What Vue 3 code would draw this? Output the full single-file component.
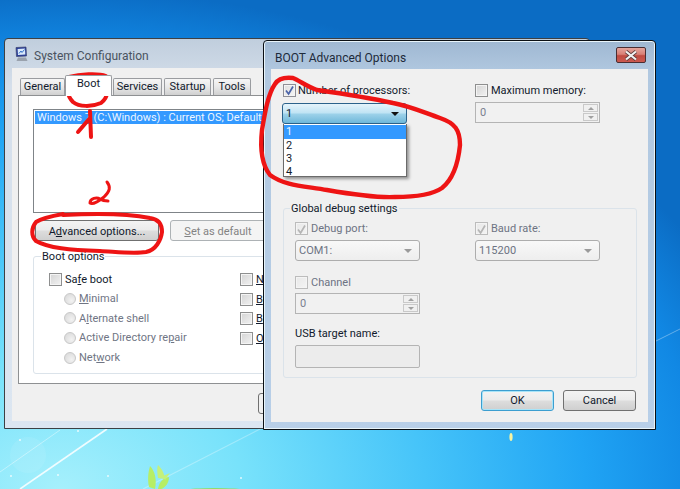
<script setup>
const tabs = ['General', 'Boot', 'Services', 'Startup', 'Tools']
const radios = [
  { before: '', key: 'M', after: 'inimal' },
  { before: 'A', key: 'l', after: 'ternate shell' },
  { before: 'Active Directory re', key: 'p', after: 'air' },
  { before: 'Net', key: 'w', after: 'ork' }
]
const sideOptions = [
  { key: 'N', after: 'o GUI boot' },
  { key: 'B', after: 'oot log' },
  { key: 'B', after: 'ase video' },
  { key: 'O', after: 'S boot information' }
]
const procs = ['1', '2', '3', '4']
</script>

<template>
  <div class="desktop">
    <svg class="wall" width="680" height="489" viewBox="0 0 680 489">
      <ellipse cx="28" cy="455" rx="18" ry="18" fill="#ffffff" opacity=".08" />
      <path d="M20 489L107 429" stroke="#fff" stroke-width="1.6" opacity=".85" fill="none" />
      <path d="M0 472L60 430" stroke="#fff" stroke-width="1" opacity=".4" fill="none" />
      <path d="M143 489L262 428" stroke="#fff" stroke-width="1.2" opacity=".3" fill="none" />
      <path d="M656 341L680 329" stroke="#fff" stroke-width="1" opacity=".35" fill="none" />
      <path d="M149 487C147 477 149 470 150 466C155 471 157 480 155 489Z" fill="#b6ee66" />
      <path d="M158 478C157 472 157 467 158 465C162 469 165 474 164 479Z" fill="#c4f17c" />
      <path d="M158 489C159 482 163 478 169 477C169 483 165 488 161 489Z" fill="#b6ee66" />
      <path d="M163 476L170 473L165 480Z" fill="#c4f17c" />
      <ellipse cx="215" cy="490" rx="28" ry="2" fill="#8fdc6c" />
      <ellipse cx="511" cy="437" rx="1.6" ry="4" fill="#f6f4a2" />
      <g fill="#fff" opacity=".8">
        <circle cx="20" cy="440" r="1" /><circle cx="78" cy="431" r="1" /><circle cx="108" cy="476" r="1" />
        <circle cx="58" cy="475" r="1" /><circle cx="241" cy="478" r="1" /><circle cx="11" cy="476" r="1" />
      </g>
    </svg>

    <section class="window sys">
      <header class="titlebar">
        <svg class="appicon" width="15" height="16" viewBox="0 0 15 16">
          <path d="M2 1.5L12 1L12.5 10L2.5 10.5Z" fill="#2b3f9a" stroke="#3b4470" stroke-width=".7" />
          <path d="M3.6 3L11 2.6L11.3 8.6L4 9Z" fill="#d9e9fb" />
          <path d="M5 7.5L7 5L8 6.5L10.5 3.5" stroke="#3370c8" stroke-width="1" fill="none" />
          <path d="M4 11.5H12L13.5 15H2.5Z" fill="#9aa2ad" />
        </svg>
        <span class="title">System Configuration</span>
      </header>
      <div class="client">
        <div class="tabs">
          <div v-for="t in tabs" :key="t" class="tab" :class="['tab-' + t.toLowerCase(), { active: t === 'Boot' }]">{{ t }}</div>
        </div>
        <div class="sheet">
          <div class="listbox">
            <div class="listsel">Windows 7 (C:\Windows) : Current OS; Default OS</div>
          </div>
          <div class="actions">
            <button class="btn adv">A<u>d</u>vanced options...</button>
            <button class="btn off setdef"><u>S</u>et as default</button>
          </div>
          <div class="group bootopts">
            <span class="legend">Boot options</span>
            <div class="bootcols">
              <div class="bootleft">
                <label class="cbrow safe"><i class="cb"></i><span>Sa<u>f</u>e boot</span></label>
                <div v-for="r in radios" :key="r.after" class="radiorow">
                  <i class="radio"></i><span>{{ r.before }}<u>{{ r.key }}</u>{{ r.after }}</span>
                </div>
              </div>
              <div class="bootright">
                <label v-for="o in sideOptions" :key="o.after" class="cbrow"><i class="cb"></i><span><u>{{ o.key }}</u>{{ o.after }}</span></label>
              </div>
            </div>
          </div>
        </div>
        <div class="sysfoot"><button class="btn">OK</button></div>
      </div>
    </section>

    <section class="window adv-dialog">
      <header class="titlebar dlgbar">
        <span class="dlgtitle">BOOT Advanced Options</span>
        <button class="close" aria-label="Close">
          <svg width="14" height="11" viewBox="0 0 14 11">
            <path d="M2 1.5L12 9.5M12 1.5L2 9.5" stroke="#5b3a3a" stroke-width="3.6" fill="none" />
            <path d="M2 1.5L12 9.5M12 1.5L2 9.5" stroke="#f2f2f2" stroke-width="2.2" fill="none" />
          </svg>
        </button>
      </header>
      <div class="dlgclient">
        <div class="twocol top">
          <div class="col">
            <label class="cbrow lead"><i class="cb on"><svg width="11" height="11" viewBox="0 0 11 11"><path d="M2 5.5L4.6 9L9 1.5" stroke="#4a63a8" stroke-width="1.7" fill="none" /></svg></i><span>Number of processors:</span></label>
            <div class="combo focus">
              <span>1</span>
              <i class="arrow dark"></i>
              <ul class="droplist">
                <li v-for="p in procs" :key="p" :class="{ sel: p === '1' }">{{ p }}</li>
              </ul>
            </div>
          </div>
          <div class="col">
            <label class="cbrow raised"><i class="cb"></i><span>Maximum memory:</span></label>
            <div class="spin mem">
              <span>0</span>
              <div class="spinbtns"><b><i class="tri up"></i></b><b><i class="tri"></i></b></div>
            </div>
          </div>
        </div>

        <div class="group debug">
          <span class="legend">Global debug settings</span>
          <div class="twocol inner">
            <div class="col">
              <label class="cbrow dis raised"><i class="cb off"><svg width="11" height="11" viewBox="0 0 11 11"><path d="M2 5.5L4.6 9L9 1.5" stroke="#b5b5b5" stroke-width="1.7" fill="none" /></svg></i><span>Debug port:</span></label>
              <div class="combo ghost"><span>COM1:</span><i class="arrow"></i></div>
            </div>
            <div class="col">
              <label class="cbrow dis raised"><i class="cb off"><svg width="11" height="11" viewBox="0 0 11 11"><path d="M2 5.5L4.6 9L9 1.5" stroke="#b5b5b5" stroke-width="1.7" fill="none" /></svg></i><span>Baud rate:</span></label>
              <div class="combo ghost"><span>115200</span><i class="arrow"></i></div>
            </div>
          </div>
          <label class="cbrow dis raised channel"><i class="cb off"></i><span>Channel</span></label>
          <div class="spin chan">
            <span>0</span>
            <div class="spinbtns"><b><i class="tri up"></i></b><b><i class="tri"></i></b></div>
          </div>
          <div class="usblabel">USB target name:</div>
          <div class="usbinput"></div>
        </div>

        <div class="dlgfoot">
          <button class="btn def">OK</button>
          <button class="btn">Cancel</button>
        </div>
      </div>
    </section>

    <svg class="ink" width="680" height="489" viewBox="0 0 680 489" fill="none" stroke="#ee1414" stroke-width="4" stroke-linecap="round" stroke-linejoin="round">
      <path d="M69 77C80 74 98 73 106 76C110 84 109 97 101 103C92 107 79 107 73 102C67 96 65 85 69 77" />
      <path d="M90 111L91 137M78 132L90 118" />
      <path d="M107 182C111 187 110 191 104 197C99 201 93 205 90 203C90 198 97 197 100 199C103 201 105 201 108 201" stroke-width="3" />
      <path d="M63 214C52 216 42 218 36 222C31 228 31 236 36 241C48 248 70 250 100 251C118 252 134 254 146 252C156 250 161 240 162 232C162 224 158 219 150 218C130 214 100 213 63 215" />
      <path d="M293 78C284 77 278 79 275 84C268 94 265 112 262 130C260 148 262 165 270 175C285 186 305 186 327 190C350 194 375 198 395 197C415 197 432 195 442 188C452 180 458 165 460 145C460 130 455 123 440 118C425 113 410 106 393 103C370 98 345 94 317 90C308 87 300 81 293 78" stroke-width="4.4" />
    </svg>
  </div>
</template>

<style>
html, body { margin: 0; padding: 0; overflow: hidden; }
</style>

<style scoped>
.desktop {
  position: relative;
  width: 680px;
  height: 489px;
  overflow: hidden;
  font-family: Roboto, "Noto Sans", sans-serif;
  font-size: 11px;
  color: #111a2c;
  background: radial-gradient(ellipse 730px 500px at 60px 490px, #a6f0fc 0, #78e2fb 25%, #46c4f9 50%, #20a4f4 72%, #1188e4 88%, #0b6cc4 100%);
}
.wall, .ink { position: absolute; left: 0; top: 0; }
.ink { pointer-events: none; }
.window { position: absolute; box-sizing: border-box; display: flex; flex-direction: column; }
.sys {
  left: 4px; top: 38px; width: 586px; height: 391px;
  border: 1px solid #3d4044; border-radius: 4px 4px 0 0;
  background: linear-gradient(#c0cedd 0, #d5dfeb 12%, #dce6f1 100%);
  overflow: hidden;
}
.titlebar { height: 29px; flex: none; display: flex; align-items: center; box-sizing: border-box; }
.sys .titlebar { padding: 4px 0 0 9px; }
.appicon { margin-right: 5px; flex: none; margin-top: -4px; }
.title { font-size: 12px; color: #4a5360; }
.client {
  flex: 1; margin: 0 7px 7px; background: #f0f0f0;
  padding: 7px 0 0 6px; display: flex; flex-direction: column;
}
.tabs { display: flex; align-items: flex-end; height: 20px; padding-left: 2px; gap: 1px; }
.tab {
  height: 17px; box-sizing: border-box; border: 1px solid #9a9ca0; border-bottom: 0;
  border-radius: 2px 2px 0 0; text-align: center; line-height: 16px;
  background: linear-gradient(#f6f6f6, #e8e8e8 50%, #d0d0d0);
}
.tab-general { width: 45px; }
.tab-boot { width: 47px; }
.tab-services { width: 49px; }
.tab-startup { width: 47px; margin-left: 1px; }
.tab-tools { width: 38px; margin-left: 1px; }
.tab.active { background: #fff; position: relative; z-index: 1; margin-bottom: -1px; height: 21px; line-height: 16px; margin-left: -1px; }
.sheet {
  box-sizing: border-box; height: 289px; background: #fff;
  border: 1px solid #8e9092; padding: 13px 14px 0 14px;
}
.listbox { height: 104px; box-sizing: border-box; border: 1px solid #7f8488; padding: 1px; overflow: hidden; }
.listsel { background: #3399ff; color: #eef6ff; height: 13px; line-height: 13px; white-space: nowrap; padding-left: 2px; }
.actions { display: flex; gap: 11px; margin-top: 7px; padding-left: 2px; }
.btn {
  box-sizing: border-box; width: 73px; height: 21px; padding: 0;
  border: 1px solid #707070; border-radius: 3px;
  font: inherit; color: #111a2c; line-height: 17px;
  background: linear-gradient(#f3f3f3, #ebebeb 48%, #dddddd 52%, #cfcfcf);
}
.adv { width: 124px; padding-top: 1px; }
.off { background: #f4f4f4; border-color: #adb2b5; color: #838383; padding-top: 1px; }
.setdef { width: 96px; }
.group { position: relative; box-sizing: border-box; border: 1px solid #dbe3ea; border-radius: 3px; }
.legend { position: absolute; left: 7px; top: -8px; background: inherit; padding: 0 1px; line-height: 16px; }
.debug .legend { left: 6px; }
.bootopts { margin-top: 15px; height: 118px; background: #fff; }
.bootcols { display: flex; padding: 16px 0 0 15px; }
.bootleft { width: 191px; }
.bootright { display: flex; flex-direction: column; gap: 6.6px; }
.cbrow { display: flex; align-items: center; height: 13px; gap: 3px; white-space: nowrap; }
.raised span { margin-top: -1px; }
.cb {
  width: 13px; height: 13px; flex: none; box-sizing: border-box;
  border: 1px solid #8e8f8f; box-shadow: inset 0 0 0 1px #f4f4f4;
  background: linear-gradient(135deg, #d4d4d4, #f2f2f2);
  display: flex; align-items: center; justify-content: center;
}
.cb.on { background: linear-gradient(135deg, #dedede, #f6f6f6); border-color: #8f8f96; }
.cb.off { background: linear-gradient(135deg, #e8e8e8, #f4f4f4); border-color: #bcbcbc; }
.radiorow { display: flex; align-items: center; height: 19.6px; margin-left: 15px; gap: 3px; color: #6f7584; }
.bootleft .safe { margin-bottom: 3px; }
.radio {
  width: 12px; height: 12px; border-radius: 50%; flex: none; box-sizing: border-box;
  border: 1px solid #c8c8c8; background: radial-gradient(circle at 65% 65%, #f2f2f2, #d6d6d6);
}
.sysfoot { padding: 9px 0 0 240px; }
.sysfoot .btn { width: 74px; height: 21px; background: #f0f0f0; }

.adv-dialog {
  left: 263px; top: 40px; width: 393px; height: 390px;
  border: 1px solid #0a0f14; border-radius: 4px 4px 0 0;
  box-shadow: inset 0 0 0 1px #e8f4fa;
  background: linear-gradient(#9fb8d2 0, #b1c8e0 8%, #b8cfe8 100%);
}
.dlgbar { padding: 5px 9px 0 11px; justify-content: space-between; height: 28px; }
.dlgtitle { font-size: 12px; color: #1d2a3a; }
.close {
  width: 30px; height: 16px; padding: 0; border: 1px solid #4a2e32; border-radius: 2px;
  margin-top: -5px; display: flex; align-items: center; justify-content: center;
  background: linear-gradient(#e4a59c, #d97f75 45%, #bf4a40 55%, #cc5a50);
}
.dlgclient { flex: 1; margin: 0 7px 7px; background: #f0f0f0; display: flex; flex-direction: column; padding: 15px 11px 0 11px; position: relative; }
.twocol { display: grid; grid-template-columns: 193px 125px; }
.col { display: flex; flex-direction: column; }
.top { height: 124px; }
.lead { margin-left: 1px; gap: 2px; }
.lead span { margin-top: -1px; }
.combo {
  position: relative; box-sizing: border-box; width: 125px; height: 21px; margin-top: 6px;
  display: flex; align-items: center; justify-content: space-between; padding: 0 7px 0 3px;
  border: 1px solid #adadad; border-radius: 3px;
  background: linear-gradient(#f8f8f8, #eeeeee);
}
.focus {
  border: 1px solid #2c628b;
  background: linear-gradient(#e6f4fb, #bfe3f4 48%, #9ed2ea 52%, #6fb8da);
}
.ghost { color: #6d7383; margin-top: 5px; }
.arrow { width: 0; height: 0; border: 4px solid transparent; border-top: 4px solid #9a9a9a; border-bottom: 0; }
.arrow.dark { border-top-color: #111; }
.droplist {
  position: absolute; left: 0; top: 20px; width: 124px; margin: 0; padding: 1px 0 0; list-style: none;
  box-sizing: border-box; height: 53px; background: #fff;
  border: 1px solid #6b6b6b; border-top: 0;
  box-shadow: 2px 2px 3px rgba(0,0,0,.4);
  z-index: 2;
}
.droplist li { height: 13px; line-height: 13px; padding-left: 2px; }
.droplist li.sel { background: #3399ff; color: #eef6ff; height: 14px; line-height: 14px; }
.spin {
  box-sizing: border-box; width: 125px; height: 21px; margin-top: 5px;
  border: 1px solid #b4b4b4; display: flex; align-items: center; justify-content: space-between;
  padding: 0 1px 0 4px; color: #7a8090; background: #f1f1f1;
}
.spinbtns { display: flex; flex-direction: column; gap: 1px; }
.spinbtns b { display: flex; align-items: center; justify-content: center; width: 15px; height: 8px; border: 1px solid #c9c9c9; box-sizing: border-box; background: #f0f0f0; }
.tri { width: 0; height: 0; border: 3px solid transparent; border-top: 3px solid #a0a0a0; border-bottom: 0; }
.tri.up { border-top: 0; border-bottom: 3px solid #a0a0a0; }
.debug { height: 170px; margin-left: 1px; background: #f0f0f0; padding: 13px 0 0 11px; }
.dis { color: #6d7383; }
.inner { grid-template-columns: 180px 125px; }
.channel { margin-top: 15px; }
.chan { margin-top: 4px; }
.usblabel { margin-top: 12px; line-height: 16px; }
.usbinput { box-sizing: border-box; width: 125px; height: 23px; margin-top: 3px; border: 1px solid #b4b4b4; border-radius: 2px; background: #ececec; }
.dlgfoot { display: flex; justify-content: flex-end; gap: 9px; margin-top: 12px; padding-right: 1px; }
.def { border-color: #3c9ed0; box-shadow: inset 0 0 0 1px #a8e4f8; }
</style>
